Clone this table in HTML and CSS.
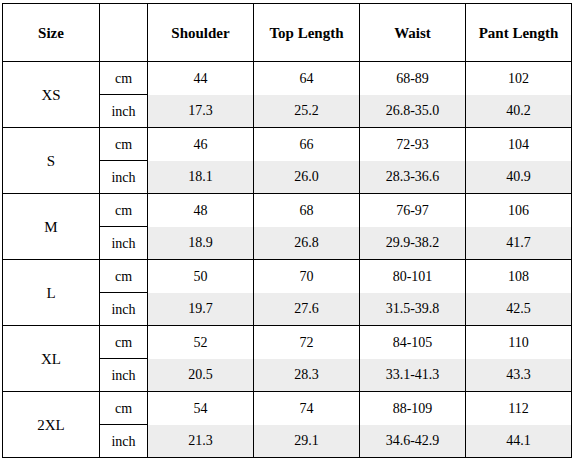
FILE: index.html
```html
<!DOCTYPE html>
<html>
<head>
<meta charset="utf-8">
<link rel="stylesheet" href="styles.css">
</head>
<body>
<table class="chart">
  <colgroup>
    <col class="c-size"><col class="c-unit"><col class="c-data"><col class="c-data"><col class="c-data"><col class="c-data">
  </colgroup>
  <thead>
    <tr class="head">
      <th>Size</th><th></th><th>Shoulder</th><th>Top Length</th><th>Waist</th><th>Pant Length</th>
    </tr>
  </thead>
  <tbody>
    <tr class="cm"><td class="size" rowspan="2">XS</td><td class="unit">cm</td><td>44</td><td>64</td><td>68-89</td><td>102</td></tr>
    <tr class="inch"><td class="unit">inch</td><td>17.3</td><td>25.2</td><td>26.8-35.0</td><td>40.2</td></tr>
    <tr class="cm"><td class="size" rowspan="2">S</td><td class="unit">cm</td><td>46</td><td>66</td><td>72-93</td><td>104</td></tr>
    <tr class="inch"><td class="unit">inch</td><td>18.1</td><td>26.0</td><td>28.3-36.6</td><td>40.9</td></tr>
    <tr class="cm"><td class="size" rowspan="2">M</td><td class="unit">cm</td><td>48</td><td>68</td><td>76-97</td><td>106</td></tr>
    <tr class="inch"><td class="unit">inch</td><td>18.9</td><td>26.8</td><td>29.9-38.2</td><td>41.7</td></tr>
    <tr class="cm"><td class="size" rowspan="2">L</td><td class="unit">cm</td><td>50</td><td>70</td><td>80-101</td><td>108</td></tr>
    <tr class="inch"><td class="unit">inch</td><td>19.7</td><td>27.6</td><td>31.5-39.8</td><td>42.5</td></tr>
    <tr class="cm"><td class="size" rowspan="2">XL</td><td class="unit">cm</td><td>52</td><td>72</td><td>84-105</td><td>110</td></tr>
    <tr class="inch"><td class="unit">inch</td><td>20.5</td><td>28.3</td><td>33.1-41.3</td><td>43.3</td></tr>
    <tr class="cm"><td class="size" rowspan="2">2XL</td><td class="unit">cm</td><td>54</td><td>74</td><td>88-109</td><td>112</td></tr>
    <tr class="inch"><td class="unit">inch</td><td>21.3</td><td>29.1</td><td>34.6-42.9</td><td>44.1</td></tr>
  </tbody>
</table>
</body>
</html>
```
FILE: styles.css
```css
html, body {
  margin: 0;
  padding: 0;
  background: #ffffff;
}
.chart {
  margin: 3px 0 0 2px;
  border-collapse: collapse;
  table-layout: fixed;
  width: 570px;
  font-family: "Liberation Serif", "Times New Roman", serif;
  color: #000;
}
.c-size { width: 97px; }
.c-unit { width: 48px; }
.c-data { width: 106px; }
.chart th, .chart td {
  border: 1px solid #000;
  padding: 1px 0 0 0;
  text-align: center;
  vertical-align: middle;
}
.head th {
  height: 56px;
  font-size: 15px;
  font-weight: bold;
}
.chart td {
  height: 31px;
  font-size: 14px;
}
.cm td { border-bottom: none; }
.inch td { border-top: none; background: #ededed; }
.cm td.unit { border-bottom: 1px solid #000; }
.inch td.unit { background: #ffffff; border-top: 1px solid #000; }
.chart td.size { background: #ffffff; border-bottom: 1px solid #000; font-size: 15px; }
```
